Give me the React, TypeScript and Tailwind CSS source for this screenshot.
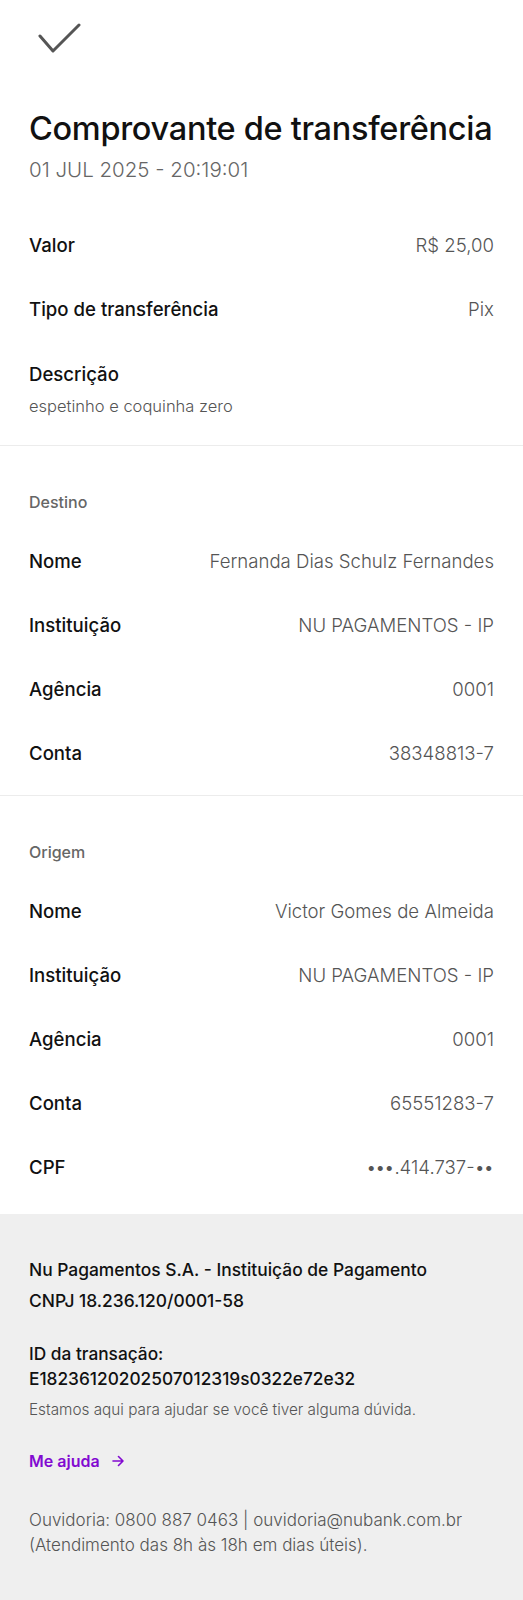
import React from "react";

type Row = { label: string; value: React.ReactNode };

const dots = (n: string) => <span className="tracking-[-1.5px] pr-[1.5px]">{n}</span>;

const destino: Row[] = [
  { label: "Nome", value: "Fernanda Dias Schulz Fernandes" },
  { label: "Instituição", value: "NU PAGAMENTOS - IP" },
  { label: "Agência", value: "0001" },
  { label: "Conta", value: "38348813-7" },
];

const origem: Row[] = [
  { label: "Nome", value: "Victor Gomes de Almeida" },
  { label: "Instituição", value: "NU PAGAMENTOS - IP" },
  { label: "Agência", value: "0001" },
  { label: "Conta", value: "65551283-7" },
  {
    label: "CPF",
    value: (
      <>
        {dots("•••")}.414.737-{dots("••")}
      </>
    ),
  },
];

function InfoRow({ label, value }: Row) {
  return (
    <div className="flex h-16 items-center justify-between">
      <span className="text-[18.6px] font-medium text-[#111]">{label}</span>
      <span className="text-[18.6px] font-light text-[#555]">{value}</span>
    </div>
  );
}

function Section({ title, rows, last }: { title: string; rows: Row[]; last?: boolean }) {
  return (
    <div className={last ? "px-[29px] pt-[28px] pb-[14px]" : "border-b border-[#ececec] px-[29px] pt-[28px] pb-[9px]"}>
      <div className="flex h-14 items-center text-[16px] font-medium text-[#666]">{title}</div>
      {rows.map((r) => (
        <InfoRow key={r.label} {...r} />
      ))}
    </div>
  );
}

export default function App() {
  return (
    <div className="min-h-[1600px] bg-[#efefef] font-['Inter',sans-serif] antialiased">
      <div className="bg-white">
        {/* cabeçalho */}
        <div className="px-[29px]">
          <svg width="46" height="34" viewBox="0 0 46 34" className="ml-[9px] block" style={{ marginTop: 21 }}>
            <polyline points="2,15 15,30 41,4" fill="none" stroke="#555" strokeWidth="3" strokeLinecap="round" strokeLinejoin="round" />
          </svg>
          <h1 className="mt-[54px] text-[32.5px] leading-[40px] font-medium tracking-[-0.3px] text-[#111]">
            Comprovante de transferência
          </h1>
          <p className="mt-[7px] text-[20.5px] leading-[28px] font-light text-[#666]">01 JUL 2025 - 20:19:01</p>
        </div>

        {/* resumo */}
        <div className="border-b border-[#ececec] px-[29px] pt-[30px] pb-[28px]">
          <InfoRow label="Valor" value="R$ 25,00" />
          <InfoRow label="Tipo de transferência" value="Pix" />
          <div className="mt-[19px] text-[18.6px] leading-[26px] font-medium text-[#111]">Descrição</div>
          <div className="mt-[8px] text-[16.5px] leading-[22px] font-light text-[#555]">espetinho e coquinha zero</div>
        </div>

        <Section title="Destino" rows={destino} />
        <Section title="Origem" rows={origem} last />
      </div>

      {/* rodapé */}
      <div className="px-[29px] pt-[40px] pb-[40px]">
        <p className="text-[17.4px] leading-[31px] font-medium text-[#111]">
          Nu Pagamentos S.A. - Instituição de Pagamento
          <br />
          CNPJ 18.236.120/0001-58
        </p>
        <p className="mt-[25px] text-[17.3px] leading-[25px] font-medium text-[#111]">
          ID da transação:
          <br />
          E18236120202507012319s0322e72e32
        </p>
        <p className="mt-[8px] text-[15.3px] leading-[22px] font-light text-[#555]">
          Estamos aqui para ajudar se você tiver alguma dúvida.
        </p>
        <div className="mt-[28px] flex items-center gap-[12px] text-[16px] font-semibold text-[#820ad1]">
          <span>Me ajuda</span>
          <svg width="12" height="12" viewBox="0 0 12 12" fill="none" stroke="#820ad1" strokeWidth="1.6" strokeLinecap="round" strokeLinejoin="round">
            <path d="M1 6h10M6.5 1.5 11 6l-4.5 4.5" />
          </svg>
        </div>
        <p className="mt-[35px] text-[17px] leading-[25px] font-light text-[#555]">
          Ouvidoria: 0800 887 0463 | ouvidoria@nubank.com.br
          <br />
          (Atendimento das 8h às 18h em dias úteis).
        </p>
      </div>
    </div>
  );
}
